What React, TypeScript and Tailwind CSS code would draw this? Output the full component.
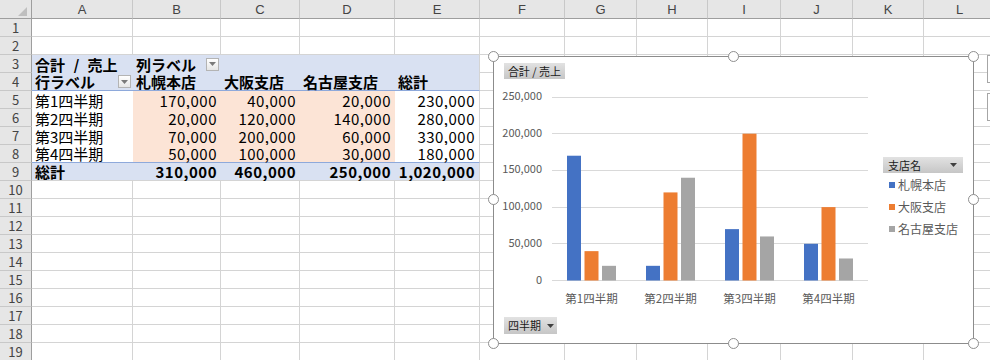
import React from "react";

const COLS = ["A", "B", "C", "D", "E", "F", "G", "H", "I", "J", "K", "L"];
const ROWS = 19;

type Cell = {
  text?: string;
  bold?: boolean;
  right?: boolean;
  bg?: string;
  btn?: boolean;
  kind?: "pivot" | "normal";
  border?: string;
  wide?: boolean;
};

const fmt = (n: number) => n.toLocaleString("en-US");

const data: [string, number, number, number][] = [
  ["第1四半期", 170000, 40000, 20000],
  ["第2四半期", 20000, 120000, 140000],
  ["第3四半期", 70000, 200000, 60000],
  ["第4四半期", 50000, 100000, 30000],
];

function DropBtn() {
  return (
    <span className="flex h-[13px] w-[13px] shrink-0 items-center justify-center border border-[#b4b4b4] bg-linear-to-b from-[#ffffff] to-[#e6e6e6]">
      <svg width="7" height="4" viewBox="0 0 7 4">
        <polygon points="0,0 7,0 3.5,4" fill="#7a7a7a" />
      </svg>
    </span>
  );
}

function Tri() {
  return (
    <svg width="7" height="4" viewBox="0 0 7 4" className="shrink-0">
      <polygon points="0,0 7,0 3.5,4" fill="#404040" />
    </svg>
  );
}

function getCell(r: number, c: number): Cell {
  const inPivot = r >= 3 && r <= 9 && c <= 4;
  if (!inPivot) return { kind: "normal" };
  const blue = "bg-[#d9e1f2]";
  const peach = "bg-[#fce4d6]";
  let border = "";
  if (r === 4 || r === 8) border = "border-b border-b-[#8ea9db]";
  else if (r === 9) border = "border-b border-b-[#d4d4d4]";
  if (c === 4) border += " border-r border-r-[#d4d4d4]";
  if (r === 3) {
    const t: Cell = { kind: "pivot", bg: blue, border, bold: true };
    if (c === 0) return { ...t, text: "合計 / 売上", wide: true };
    if (c === 1) return { ...t, text: "列ラベル", btn: true };
    return t;
  }
  if (r === 4) {
    const heads = ["行ラベル", "札幌本店", "大阪支店", "名古屋支店", "総計"];
    return { kind: "pivot", bg: blue, border, bold: true, text: heads[c], btn: c === 0 };
  }
  if (r >= 5 && r <= 8) {
    const row = data[r - 5];
    if (c === 0) return { kind: "pivot", bg: "bg-white", border, text: row[0] };
    if (c === 4)
      return { kind: "pivot", bg: "bg-white", border, right: true, text: fmt(row[1] + row[2] + row[3]) };
    return { kind: "pivot", bg: peach, border, right: true, text: fmt(row[c] as number) };
  }
  const totals = [0, 1, 2].map((i) => data.reduce((s, d) => s + (d[i + 1] as number), 0));
  if (c === 0) return { kind: "pivot", bg: blue, border, bold: true, text: "総計" };
  if (c === 4)
    return { kind: "pivot", bg: blue, border, bold: true, right: true, text: fmt(totals[0] + totals[1] + totals[2]) };
  return { kind: "pivot", bg: blue, border, bold: true, right: true, text: fmt(totals[c - 1]) };
}

const isNum = (s?: string) => !!s && /^[0-9,]+$/.test(s);

function SheetCell({ r, c }: { r: number; c: number }) {
  const cell = getCell(r, c);
  if (cell.kind === "normal") {
    return <div className="border-r border-b border-[#d4d4d4] bg-white" />;
  }
  const numeric = isNum(cell.text);
  return (
    <div
      className={`flex items-center overflow-visible whitespace-nowrap ${cell.bg} ${cell.border} ${
        cell.right ? "justify-end pr-[4px]" : "justify-between pl-[3px] pr-[2px]"
      } ${cell.bold ? "font-bold" : "font-normal"} text-[15px] leading-none text-black ${
        numeric ? "tracking-[0.5px]" : ""
      } ${cell.wide ? "[word-spacing:5px]" : ""}`}
    >
      {cell.text ? <span>{cell.text}</span> : null}
      {cell.btn ? <DropBtn /> : null}
    </div>
  );
}

const BLUE = "#4472c4";
const ORANGE = "#ed7d31";
const GRAY = "#a5a5a5";

function Chart() {
  const y0 = 224;
  const k = 183.5 / 250000;
  const ticks = [0, 50000, 100000, 150000, 200000, 250000];
  const cats = ["第1四半期", "第2四半期", "第3四半期", "第4四半期"];
  const colors = [BLUE, ORANGE, GRAY];
  const handles: [number, number][] = [
    [0, 0],
    [240, 0],
    [480, 0],
    [0, 143],
    [480, 143],
    [0, 287],
    [240, 287],
    [480, 287],
  ];
  return (
    <div className="absolute left-[493px] top-[56px] h-[288px] w-[481px]">
      <div className="absolute inset-0 border border-[#8c8c8c] bg-white" />
      <svg className="absolute left-0 top-0" width="481" height="288" viewBox="0 0 481 288">
        {ticks.map((t) => (
          <line
            key={t}
            x1={59}
            x2={375}
            y1={Math.round(y0 - t * k) + 0.5}
            y2={Math.round(y0 - t * k) + 0.5}
            stroke="#d9d9d9"
            strokeWidth={1}
          />
        ))}
        {ticks.map((t) => (
          <text
            key={"l" + t}
            x={49}
            y={y0 - t * k - 1.5}
            textAnchor="end"
            dominantBaseline="central"
            fontSize="11"
            fill="#595959"
            fontFamily="'Noto Sans CJK JP', sans-serif"
          >
            {fmt(t)}
          </text>
        ))}
        {data.map((d, i) => {
          const cx = 59 + 79 * (i + 0.5);
          return (
            <g key={i}>
              {[1, 2, 3].map((j) => {
                const v = d[j] as number;
                const h = v * k;
                return (
                  <rect
                    key={j}
                    x={cx - 24.5 + (j - 1) * 17.5}
                    y={y0 - h + 0.5}
                    width={14}
                    height={h}
                    fill={colors[j - 1]}
                  />
                );
              })}
              <text
                x={cx}
                y={241.5}
                textAnchor="middle"
                dominantBaseline="central"
                fontSize="11.5"
                fill="#595959"
                fontFamily="'Noto Sans CJK JP', sans-serif"
              >
                {cats[i]}
              </text>
            </g>
          );
        })}
      </svg>

      <div className="absolute left-[11px] top-[7px] flex h-[16px] w-[61px] items-center justify-center bg-linear-to-b from-[#e2e2e2] to-[#c6c6c6] text-[11px] leading-none text-[#1a1a1a]">
        合計 / 売上
      </div>

      <div className="absolute left-[11px] top-[261px] flex h-[17px] w-[53px] items-center gap-[6px] bg-linear-to-b from-[#e2e2e2] to-[#c6c6c6] pl-[4px] text-[11px] leading-none text-[#1a1a1a]">
        <span>四半期</span>
        <Tri />
      </div>

      <div className="absolute left-[390px] top-[101px] flex w-[80px] flex-col">
        <div className="flex h-[16px] items-center justify-between bg-linear-to-b from-[#e2e2e2] to-[#c6c6c6] pl-[5px] pr-[6px] text-[11px] leading-none text-[#1a1a1a]">
          <span>支店名</span>
          <Tri />
        </div>
        <div className="mt-[1px] flex flex-col">
          {[
            ["札幌本店", "bg-[#4472c4]"],
            ["大阪支店", "bg-[#ed7d31]"],
            ["名古屋支店", "bg-[#a5a5a5]"],
          ].map(([t, c]) => (
            <div key={t} className="flex h-[22px] items-center gap-[3px] pl-[6px] text-[12px] leading-none text-[#595959]">
              <span className={`h-[6px] w-[6px] ${c}`} />
              <span>{t}</span>
            </div>
          ))}
        </div>
      </div>

      {handles.map(([x, y], i) => (
        <span
          key={i}
          className="absolute h-[11px] w-[11px] rounded-full border-[1.5px] border-[#8e8e8e] bg-white"
          style={{ left: x - 5, top: y - 5 }}
        />
      ))}
    </div>
  );
}

export default function App() {
  return (
    <div
      className="relative h-[360px] w-[990px] overflow-hidden bg-white"
      style={{ fontFamily: "'Noto Sans CJK JP', 'Noto Sans', sans-serif" }}
    >
      <div className="grid grid-cols-[32px_101px_88px_79px_95px_85px_85px_72px_71px_73px_72px_71px_72px] grid-rows-[19px_repeat(19,18px)]">
        <div className="relative border-r border-b border-r-[#9e9e9e] border-b-[#9e9e9e] bg-[#e6e6e6]">
          <svg className="absolute left-[18px] top-[7px]" width="9" height="9" viewBox="0 0 9 9">
            <polygon points="9,0 9,9 0,9" fill="#bfbfbf" />
          </svg>
        </div>
        {COLS.map((c) => (
          <div
            key={c}
            className="flex items-center justify-center border-r border-b border-r-[#c8c8c8] border-b-[#9e9e9e] bg-[#e6e6e6] text-[13px] leading-none text-[#444]"
            style={{ fontFamily: "'Liberation Sans', sans-serif" }}
          >
            {c}
          </div>
        ))}
        {Array.from({ length: ROWS }, (_, i) => i + 1).map((r) => (
          <React.Fragment key={r}>
            <div className="flex items-center justify-center border-r border-b border-r-[#9e9e9e] border-b-[#c8c8c8] bg-[#e6e6e6] text-[13px] leading-none text-[#444]">
              {r}
            </div>
            {COLS.map((_, c) => (
              <SheetCell key={c} r={r} c={c} />
            ))}
          </React.Fragment>
        ))}
      </div>

      <Chart />

      <div className="absolute left-[987px] top-[55px] h-[28px] w-[28px] border border-[#a6a6a6] bg-white" />
      <div className="absolute left-[987px] top-[93px] h-[28px] w-[28px] border border-[#a6a6a6] bg-white" />
    </div>
  );
}
